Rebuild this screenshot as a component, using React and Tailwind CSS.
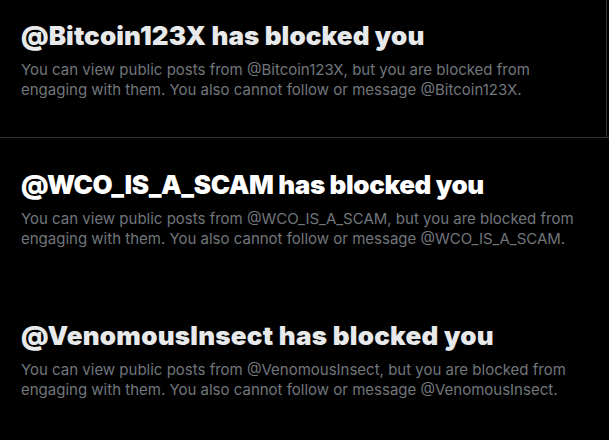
const blocks = [
  { handle: 'Bitcoin123X', track: 'tracking-[0.1px]', color: 'text-[#e7e9ea]' },
  { handle: 'WCO_IS_A_SCAM', track: 'tracking-[-0.4px]', color: 'text-white' },
  { handle: 'VenomousInsect', track: 'tracking-[0.25px]', color: 'text-[#e7e9ea]' },
]

function Blocked({ handle, track, color }) {
  return (
    <div className="pl-[21px] pr-4">
      <h2 className={`text-[26px] leading-[32px] font-black ${track} ${color}`}>
        @{handle} has blocked you
      </h2>
      <p className="mt-[8px] text-[15px] leading-[20px] text-[#71767b]">
        You can view public posts from @{handle}, but you are blocked from
        <br />
        engaging with them. You also cannot follow or message @{handle}.
      </p>
    </div>
  )
}

export default function App() {
  return (
    <div className="h-[440px] w-[609px] overflow-hidden bg-black font-['Inter',sans-serif]">
      <div className="h-[138px] border-b border-[#2f3336]">
        <div className="h-full w-[607px] border-r border-[#2f3336] pt-[20px]">
          <Blocked {...blocks[0]} />
        </div>
      </div>
      <div className="h-[150px] pt-[31px]">
        <Blocked {...blocks[1]} />
      </div>
      <div className="pt-[32px]">
        <Blocked {...blocks[2]} />
      </div>
    </div>
  )
}
